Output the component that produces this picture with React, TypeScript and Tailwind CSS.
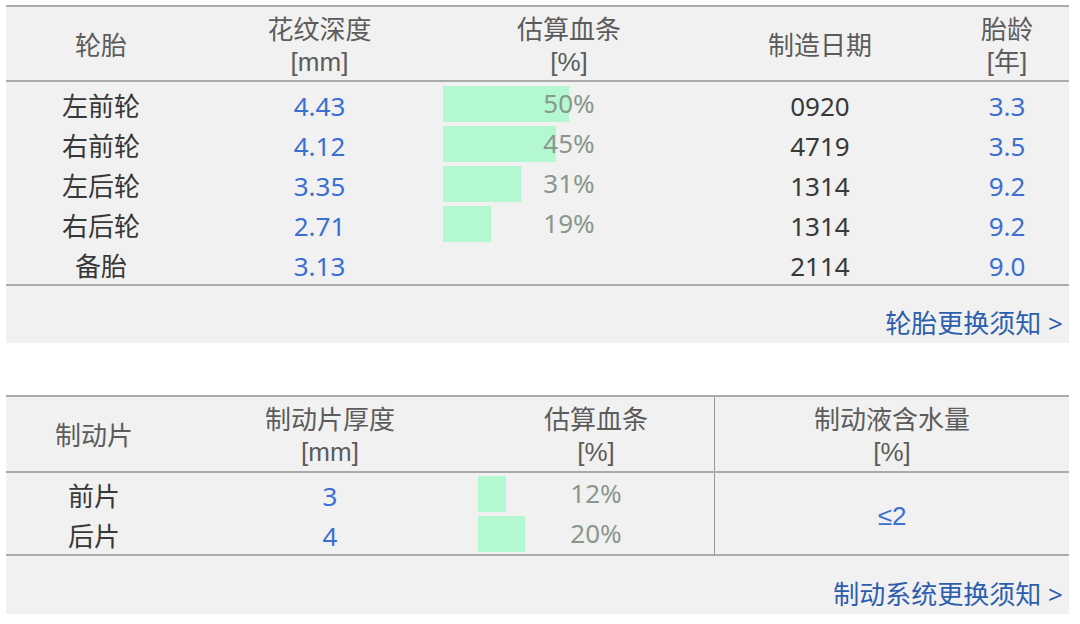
const font = { fontFamily: '"Noto Sans", "Noto Sans CJK SC", sans-serif' };
const headFont = { fontFamily: '"Liberation Sans", "Noto Sans CJK SC", sans-serif' };

type Tire = { name: string; depth: string; pct?: number; date: string; age: string };

const tires: Tire[] = [
  { name: '左前轮', depth: '4.43', pct: 50, date: '0920', age: '3.3' },
  { name: '右前轮', depth: '4.12', pct: 45, date: '4719', age: '3.5' },
  { name: '左后轮', depth: '3.35', pct: 31, date: '1314', age: '9.2' },
  { name: '右后轮', depth: '2.71', pct: 19, date: '1314', age: '9.2' },
  { name: '备胎', depth: '3.13', date: '2114', age: '9.0' },
];

const pads = [
  { name: '前片', thick: '3', pct: 12 },
  { name: '后片', thick: '4', pct: 20 },
];

function Head({ top, bottom }: { top: string; bottom?: string }) {
  return (
    <div className="flex flex-col items-center justify-center pt-[4px] text-[#5c5c5c] leading-[32px]" style={headFont}>
      <span>{top}</span>
      {bottom && <span>{bottom}</span>}
    </div>
  );
}

function Cell({ children, blue }: { children: React.ReactNode; blue?: boolean }) {
  return (
    <div className={`h-[40px] pt-[4px] text-center leading-[36px] ${blue ? 'text-[#3b6fd2]' : 'text-[#383838]'}`}>
      {children}
    </div>
  );
}

function BarCell({ pct }: { pct?: number }) {
  return (
    <div className="relative h-[40px]">
      {pct !== undefined && (
        <>
          <div className="absolute left-0 top-[2px] h-[36px] bg-[#b3f8d1]" style={{ width: `${pct}%` }} />
          <div className="relative text-center leading-[39px] text-[#8a988c]">{pct}%</div>
        </>
      )}
    </div>
  );
}

function Footer({ label }: { label: string }) {
  return (
    <div className="flex h-[57px] justify-end pr-[6px]">
      <a href="#" className="mt-[23px] leading-[28px] text-[#2d5eae]">
        {label} &gt;
      </a>
    </div>
  );
}

export default function App() {
  return (
    <div className="min-h-[624px] bg-white pt-[5px] text-[26px]" style={font}>
      {/* 轮胎 */}
      <div className="ml-[6px] w-[1063px] border-t-2 border-[#ababab] bg-[#f1f1f1]">
        <div className="grid h-[75px] grid-cols-[190px_247px_252px_250px_124px] border-b-2 border-[#ababab]">
          <Head top="轮胎" />
          <Head top="花纹深度" bottom="[mm]" />
          <Head top="估算血条" bottom="[%]" />
          <Head top="制造日期" />
          <Head top="胎龄" bottom="[年]" />
        </div>
        <div className="grid grid-cols-[190px_247px_252px_250px_124px] border-b-2 border-[#ababab] pt-[2px]">
          {tires.map((t) => (
            <div key={t.name} className="contents">
              <Cell>{t.name}</Cell>
              <Cell blue>{t.depth}</Cell>
              <BarCell pct={t.pct} />
              <Cell>{t.date}</Cell>
              <Cell blue>{t.age}</Cell>
            </div>
          ))}
        </div>
        <Footer label="轮胎更换须知" />
      </div>

      {/* 制动片 */}
      <div className="ml-[6px] mt-[52px] w-[1063px] border-t-2 border-[#ababab] bg-[#f1f1f1]">
        <div className="flex h-[76px] border-b-2 border-[#ababab]">
          <div className="grid w-[708px] grid-cols-[176px_296px_236px]">
            <Head top="制动片" />
            <Head top="制动片厚度" bottom="[mm]" />
            <Head top="估算血条" bottom="[%]" />
          </div>
          <div className="flex flex-1 justify-center border-l border-[#9a9a9a]">
            <Head top="制动液含水量" bottom="[%]" />
          </div>
        </div>
        <div className="flex border-b-2 border-[#ababab]">
          <div className="grid w-[708px] grid-cols-[176px_296px_236px] pt-[1px]">
            {pads.map((p) => (
              <div key={p.name} className="contents">
                <Cell>{p.name}</Cell>
                <Cell blue>{p.thick}</Cell>
                <BarCell pct={p.pct} />
              </div>
            ))}
          </div>
          <div
            className="flex flex-1 items-center justify-center border-l border-[#9a9a9a] pt-[6px] text-[#3b6fd2]"
            style={headFont}
          >
            ≤2
          </div>
        </div>
        <div className="h-[1px]" />
        <Footer label="制动系统更换须知" />
      </div>
    </div>
  );
}
